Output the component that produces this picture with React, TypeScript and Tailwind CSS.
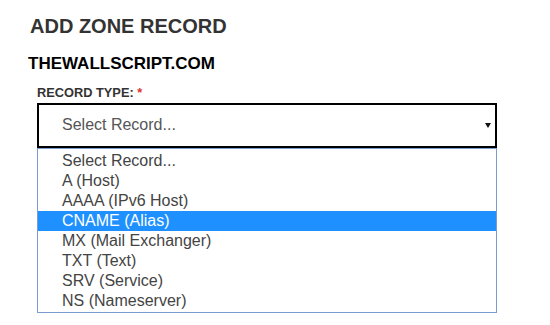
import React from "react";

const options = [
  "Select Record...",
  "A (Host)",
  "AAAA (IPv6 Host)",
  "CNAME (Alias)",
  "MX (Mail Exchanger)",
  "TXT (Text)",
  "SRV (Service)",
  "NS (Nameserver)",
];

export default function App() {
  return (
    <div className="w-[550px] h-[325px] bg-white overflow-hidden">
      <div className="pl-[30px] pt-[15px]">
        <h1 className="text-[20px] leading-[23px] font-bold text-[#333333] [font-family:'Liberation_Sans',Arial,sans-serif]">
          ADD ZONE RECORD
        </h1>
        <h2 className="mt-[16px] -ml-[2px] text-[17px] leading-[19.5px] font-bold text-black [font-family:'Liberation_Sans',Arial,sans-serif]">
          THEWALLSCRIPT.COM
        </h2>
        <label className="block mt-[11px] ml-[7px] text-[12.8px] leading-[15px] font-bold text-[#333333] [font-family:'Liberation_Sans',Arial,sans-serif]">
          RECORD TYPE: <span className="text-[#e0322d]">*</span>
        </label>
        <div className="ml-[7px] mt-[3px] w-[460px]">
          <div className="h-[45px] border-2 border-black flex items-center justify-between pl-[23px] pr-[4px]">
            <span className="text-[16px] text-[#555555] [font-family:'Liberation_Sans',Arial,sans-serif]">
              Select Record...
            </span>
            <svg width="6" height="5" viewBox="0 0 6 5" className="mt-[1px]">
              <polygon points="0,0 6,0 3,5" fill="#111" />
            </svg>
          </div>
          <ul className="border border-[#7b9bd1] pt-[2px] pb-[1px]">
            {options.map((o, i) => (
              <li
                key={o}
                className={
                  i === 3
                    ? "h-[20px] leading-[20px] pl-[24px] text-[16px] bg-[#1e90ff] text-white [font-family:'Liberation_Sans',Arial,sans-serif]"
                    : "h-[20px] leading-[20px] pl-[24px] text-[16px] text-[#444444] [font-family:'Liberation_Sans',Arial,sans-serif]"
                }
              >
                {o}
              </li>
            ))}
          </ul>
        </div>
      </div>
    </div>
  );
}
